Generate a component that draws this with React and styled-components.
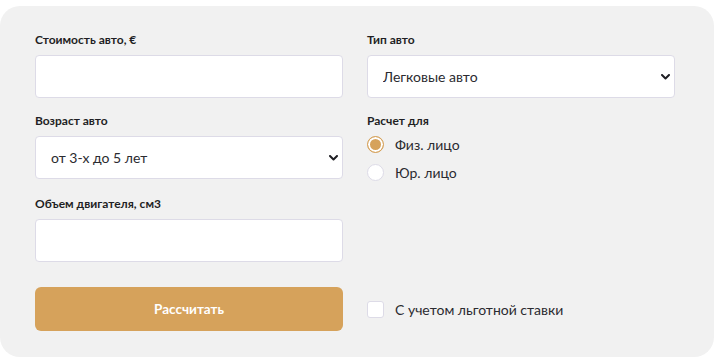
import React, { useState } from "react";
import styled, { createGlobalStyle } from "styled-components";

const Global = createGlobalStyle`
  html, body { margin: 0; padding: 0; background: #ffffff; }
  body { font-family: Lato, Inter, "Noto Sans", sans-serif; }
  * { box-sizing: border-box; }
`;

const Panel = styled.form`
  margin-top: 6px;
  width: 714px;
  height: 351px;
  background: #f1f1f1;
  border-radius: 20px;
  padding: 27px 39px 0 35px;
  display: flex;
  flex-direction: column;
`;

const Row = styled.div`
  display: grid;
  grid-template-columns: 308px 308px;
  column-gap: 24px;
  align-items: ${(p) => p.$align || "start"};
  margin-top: ${(p) => p.$mt || 0}px;
`;

const Field = styled.div`
  display: flex;
  flex-direction: column;
`;

const Label = styled.div`
  font-size: 12px;
  font-weight: 700;
  line-height: 14px;
  color: #1f1f24;
  margin-bottom: 8px;
`;

const TextInput = styled.input`
  height: 43px;
  width: 100%;
  background: #fff;
  border: 1px solid #dddbe7;
  border-radius: 4px;
  padding: 0 15px;
  font-family: inherit;
  font-size: 14px;
  outline: none;
`;

const SelectWrap = styled.div`
  position: relative;
  width: 100%;
`;

const Select = styled.select`
  appearance: none;
  -webkit-appearance: none;
  height: 43px;
  width: 100%;
  background: #fff;
  border: 1px solid #dddbe7;
  border-radius: 4px;
  padding: 0 15px;
  font-family: inherit;
  font-size: 14px;
  color: #2b2b30;
  outline: none;
`;

const Chevron = styled.svg`
  position: absolute;
  right: 5px;
  top: 19px;
  width: 9px;
  height: 6px;
  pointer-events: none;
`;

const RadioGroup = styled.div`
  display: flex;
  flex-direction: column;
  gap: 12px;
  padding-bottom: 2px;
`;

const OptionLine = styled.label`
  display: flex;
  align-items: center;
  gap: 11px;
  height: 16px;
  font-size: 14px;
  color: #2b2b30;
  cursor: pointer;
`;

const RadioDot = styled.span`
  width: 17px;
  height: 17px;
  border-radius: 50%;
  background: ${(p) => (p.$on ? "#d6a25b" : "#fff")};
  border: ${(p) => (p.$on ? "1.5px solid #d6a25b" : "1px solid #dddbe7")};
  box-shadow: ${(p) => (p.$on ? "inset 0 0 0 2px #fff" : "none")};
  flex: none;
`;

const CheckBox = styled.span`
  width: 17px;
  height: 17px;
  border-radius: 3px;
  background: #fff;
  border: 1px solid #dddbe7;
  flex: none;
`;

const Button = styled.button`
  height: 44px;
  width: 100%;
  background: #d6a25b;
  border: none;
  border-radius: 6px;
  color: #fff;
  font-family: inherit;
  font-size: 13.5px;
  font-weight: 700;
  cursor: pointer;
`;

const ChevronIcon = () => (
  <Chevron viewBox="0 0 9 6">
    <path d="M1 1l3.5 3.5L8 1" fill="none" stroke="#1f1f24" strokeWidth="2" strokeLinecap="round" strokeLinejoin="round" />
  </Chevron>
);

export default function App() {
  const [who, setWho] = useState("fiz");
  return (
    <>
      <Global />
      <Panel onSubmit={(e) => e.preventDefault()}>
        <Row>
          <Field>
            <Label>Стоимость авто, €</Label>
            <TextInput type="text" />
          </Field>
          <Field>
            <Label>Тип авто</Label>
            <SelectWrap>
              <Select defaultValue="car">
                <option value="car">Легковые авто</option>
              </Select>
              <ChevronIcon />
            </SelectWrap>
          </Field>
        </Row>
        <Row $mt={16}>
          <Field>
            <Label>Возраст авто</Label>
            <SelectWrap>
              <Select defaultValue="3-5">
                <option value="3-5">от 3-х до 5 лет</option>
              </Select>
              <ChevronIcon />
            </SelectWrap>
          </Field>
          <Field>
            <Label>Расчет для</Label>
            <RadioGroup>
              <OptionLine onClick={() => setWho("fiz")}>
                <RadioDot $on={who === "fiz"} />
                Физ. лицо
              </OptionLine>
              <OptionLine onClick={() => setWho("yur")}>
                <RadioDot $on={who === "yur"} />
                Юр. лицо
              </OptionLine>
            </RadioGroup>
          </Field>
        </Row>
        <Row $mt={15}>
          <Field>
            <Label>Объем двигателя, см3</Label>
            <TextInput type="text" />
          </Field>
        </Row>
        <Row $mt={25} $align="center">
          <Button type="submit">Рассчитать</Button>
          <OptionLine>
            <CheckBox />
            С учетом льготной ставки
          </OptionLine>
        </Row>
      </Panel>
    </>
  );
}
